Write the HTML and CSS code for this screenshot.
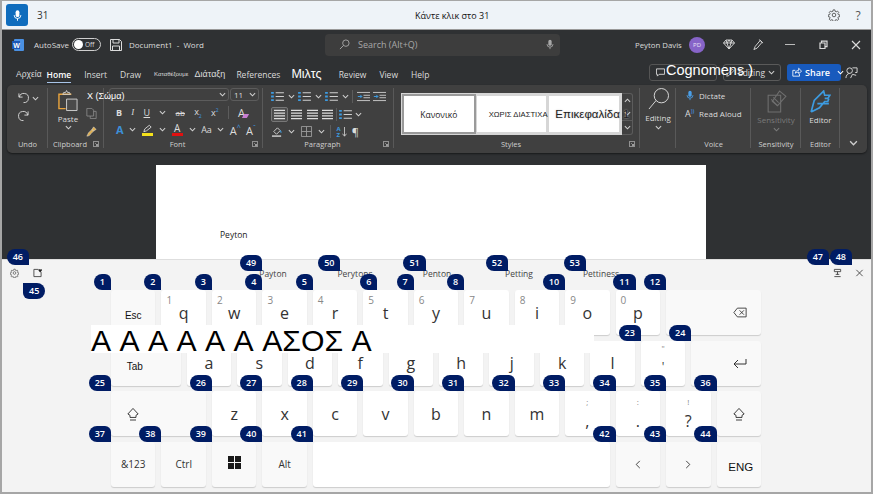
FILE: index.html
```html
<!DOCTYPE html>
<html lang="el">
<head>
    <meta charset="UTF-8">
    <meta name="viewport" content="width=device-width, initial-scale=1.0">
    <title>Voice Access - Word</title>
    <link rel="stylesheet" href="styles.css">
</head>
<body>
<svg class="defs" width="0" height="0">
    <symbol id="chev" viewBox="0 0 8 5"><path d="M1 1l3 3 3-3" fill="none" stroke="currentColor" stroke-width="1.2"/></symbol>
    <symbol id="gear" viewBox="0 0 16 16"><g fill="none" stroke="currentColor" stroke-width="1.1"><circle cx="8" cy="8" r="2.4"/><path d="M6.8 1.2h2.4l.4 2 1.3.6 1.8-1 1.6 1.7-1.1 1.7.6 1.3 2 .4v2.2l-2 .4-.6 1.3 1.1 1.7-1.6 1.7-1.8-1-1.3.6-.4 2H6.8l-.4-2-1.3-.6-1.8 1-1.6-1.7 1.1-1.7-.6-1.3-2-.4V7.900l2-.4.6-1.3L1.700 4.500l1.600-1.700 1.800 1 1.300-.6z"/></g></symbol>
    <symbol id="mic" viewBox="0 0 12 16"><rect x="3.5" y="1" width="5" height="9" rx="2.5" fill="currentColor"/><path d="M1.500 7.500a4.500 4.500 0 0 0 9 0M6 12v3" fill="none" stroke="currentColor" stroke-width="1.3"/></symbol>
    <symbol id="lines" viewBox="0 0 14 12"><path d="M1 1.500h12M1 4.500h12M1 7.500h12M1 10.500h12" stroke="currentColor" stroke-width="1.1"/></symbol>
    <symbol id="list" viewBox="0 0 14 12"><path d="M5 2h9M5 6h9M5 10h9" stroke="#d0d0d0" stroke-width="1.1"/><path d="M0 1h3v2H0zM0 5h3v2H0zM0 9h3v2H0z" fill="#3d9be0"/></symbol>
    <symbol id="indent" viewBox="0 0 16 12"><path d="M0 1h16M8 4.500h8M8 7.500h8M0 11h16" stroke="#d0d0d0" stroke-width="1.1"/><path d="M1 6h5M4 4l2 2-2 2" fill="none" stroke="#3d9be0" stroke-width="1.2"/></symbol>
    <symbol id="launcher" viewBox="0 0 8 8"><path d="M.5.500h7v7h-7z" fill="none" stroke="currentColor"/><path d="M3 3l3 3M6 4v2H4" fill="none" stroke="currentColor"/></symbol>
    <symbol id="shift" viewBox="0 0 14 16"><path d="M7 1.500L13 8l-2.500 1.500v2.500h-7V9.500L1 8z" fill="none" stroke="#333" stroke-width="1.1"/><path d="M3.500 15h7" stroke="#333" stroke-width="1.1"/></symbol>
</svg>

<div class="app">
    <header class="topbar">
        <div class="mic-button"><svg class="ico-mic" viewBox="0 0 12 16"><use href="#mic"/></svg></div>
        <span class="topbar-count">31</span>
        <span class="topbar-title">Κάντε κλικ στο 31</span>
        <svg class="topbar-gear"><use href="#gear"/></svg>
        <span class="topbar-help">?</span>
    </header>

    <section class="word">
        <div class="titlebar">
            <svg class="word-logo" viewBox="0 0 12 12"><rect x="2" width="10" height="12" rx="1" fill="#4a90e2"/><rect y="2" width="8" height="8" fill="#1c57b5"/><text x="1.200" y="8.500" class="word-logo-w">W</text></svg>
            <span class="autosave">AutoSave</span>
            <span class="toggle"><i class="toggle-knob"></i>Off</span>
            <svg class="save" viewBox="0 0 12 12"><path d="M.5.500h9l2 2v9H.5zM3 .500v3.500h6V.500M2.500 11.500V7h7v4.500" fill="none" stroke="currentColor"/></svg>
            <span class="doc-name">Document1 &nbsp;-&nbsp; Word</span>
            <div class="search">
                <svg class="search-ico" viewBox="0 0 12 12"><circle cx="7.500" cy="4.500" r="3.500" fill="none" stroke="currentColor"/><path d="M5 7l-4 4" stroke="currentColor"/></svg>
                <span>Search (Alt+Q)</span>
                <svg class="search-mic" viewBox="0 0 12 16"><use href="#mic"/></svg>
            </div>
            <span class="user">Peyton Davis</span>
            <span class="avatar">PD</span>
            <svg class="tb-ico diamond" viewBox="0 0 12 10"><path d="M3 .500h6l2.500 3L6 9.500.5 3.500zM.5 3.500h11M4 3.500L6 9.500l2-6M3 .500l1 3 2-3 2 3 1-3" fill="none" stroke="currentColor" stroke-width=".9"/></svg>
            <svg class="tb-ico pen" viewBox="0 0 12 12"><path d="M8.500 1.500l2 2L5 10l-3.500 1.500L3 8zM7 .500l4.500 4" fill="none" stroke="currentColor"/></svg>
            <span class="win-btn win-min"></span>
            <svg class="win-btn" viewBox="0 0 10 10"><path d="M2 3h5v5.500H2zM3.500 3V1.200H9v5.500H7" fill="none" stroke="currentColor" stroke-width="1.2"/></svg>
            <svg class="win-btn" viewBox="0 0 10 10"><path d="M1 1l8 8M9 1l-8 8" stroke="currentColor" stroke-width="1.1"/></svg>
        </div>

        <div class="tabs">
            <span class="tab tab-file">Αρχεία</span>
            <span class="tab tab-home">Home</span>
            <span class="tab">Insert</span>
            <span class="tab">Draw</span>
            <span class="tab tab-tiny">Καταθέξουμε</span>
            <span class="tab tab-layout">Διάταξη</span>
            <span class="tab">References</span>
            <span class="tab tab-mail">Μιλτς</span>
            <span class="tab">Review</span>
            <span class="tab">View</span>
            <span class="tab">Help</span>
            <div class="tab-actions">
                <span class="comments">
                    <svg class="comment-ico" viewBox="0 0 10 10"><path d="M.5 1h9v6H3.500L1.500 9V7h-1z" fill="none" stroke="currentColor"/></svg>
                    <span class="comments-over">Cognomens )</span>
                </span>
                <span class="editing-btn"><svg class="editing-pen" viewBox="0 0 12 12"><path d="M8.500 1.500l2 2L4 10l-3 1 1-3z" fill="none" stroke="currentColor"/></svg>Editing <svg class="chev"><use href="#chev"/></svg></span>
                <span class="share"><svg class="share-ico" viewBox="0 0 12 11"><path d="M4 3.500H1v7h8V8M4 7c0-2.500 2-3.500 4-3.500V1l3.500 3.500L8 7.500V5.500C6.500 5.500 5 6 4 7z" fill="none" stroke="currentColor"/></svg>Share<svg class="chev share-chev"><use href="#chev"/></svg></span>
                <svg class="people" viewBox="0 0 14 14"><circle cx="5" cy="5" r="3" fill="none" stroke="currentColor"/><path d="M1 13c0-3 2-5 4-5M8 2h5v5h-2M6 13l2-4 4 1" fill="none" stroke="currentColor"/></svg>
            </div>
        </div>

        <div class="ribbon">
            <div class="group group-undo">
                <div class="group-body undo-body">
                    <div class="undo-row">
                        <svg class="undo-ico" viewBox="0 0 12 12"><path d="M1 1v4h4M1.500 5A5 5 0 1 1 6 11" fill="none" stroke="currentColor"/></svg>
                        <svg class="chev"><use href="#chev"/></svg>
                    </div>
                    <div class="undo-row">
                        <svg class="undo-ico" viewBox="0 0 12 12"><path d="M11 1v4H7M10.500 5A5 5 0 1 0 6 11" fill="none" stroke="currentColor"/></svg>
                        <span class="chev"></span>
                    </div>
                </div>
                <div class="group-label">Undo</div>
            </div>

            <div class="group group-clipboard">
                <div class="group-body clip-body">
                    <div class="paste">
                        <svg class="paste-ico" viewBox="0 0 21 22"><path d="M14 4H1v15h7" fill="none" stroke="#e8a33d" stroke-width="1.5"/><path d="M5 4l1-2h2l1-2h0l1 2h2l1 2z" fill="none" stroke="#d0d0d0"/><path d="M9 9h11v12H9z" fill="#4a4a4a" stroke="#d0d0d0"/></svg>
                        <span>Paste</span>
                        <svg class="chev"><use href="#chev"/></svg>
                    </div>
                    <div class="clip-side">
                        <svg class="clip-copy" viewBox="0 0 12 13"><path d="M.5.500h6l2 2v7h-8zM8.500 4h3v8.500h-7V9.500" fill="none" stroke="#8a8a8a"/></svg>
                        <svg class="clip-brush" viewBox="0 0 13 13"><path d="M9 1l3 3-3 2-2-2zM7 4l2 2-3 3c-1 2-3 3-5 3 1-1 1-3 2-4z" fill="#e0b050" stroke="#d8d8d8" stroke-width=".6"/></svg>
                    </div>
                </div>
                <div class="group-label has-launcher">Clipboard<svg class="launcher"><use href="#launcher"/></svg></div>
            </div>

            <div class="group group-font">
                <div class="group-body font-body">
                    <div class="font-boxes">
                        <span class="font-box font-name"><svg class="chev"><use href="#chev"/></svg></span>
                        <span class="font-box font-size">11<svg class="chev"><use href="#chev"/></svg></span>
                    </div>
                    <div class="tool-row tool-row-short">
                        <b class="t-letter">B</b>
                        <i class="t-letter t-serif">I</i>
                        <span class="t-letter t-under">U</span>
                        <svg class="chev"><use href="#chev"/></svg>
                        <s class="t-small">ab</s>
                        <span class="t-letter">x<sub class="t-blue">2</sub></span>
                        <span class="t-letter">x<sup class="t-blue">2</sup></span>
                        <span class="t-sep"></span>
                        <span class="t-big">A<i class="t-pink"></i></span>
                    </div>
                    <div class="tool-row">
                        <span class="t-big t-effect">A</span>
                        <svg class="chev"><use href="#chev"/></svg>
                        <span class="t-color"><svg class="hl-ico" viewBox="0 0 12 9"><path d="M2 8l1-3 5-4 2 2-5 4z" fill="none" stroke="#d8d8d8"/></svg><i class="t-yellow"></i></span>
                        <svg class="chev"><use href="#chev"/></svg>
                        <span class="t-color"><span class="t-color-a">A</span><i class="t-red"></i></span>
                        <svg class="chev"><use href="#chev"/></svg>
                        <span class="t-letter t-aa">Aa</span>
                        <svg class="chev"><use href="#chev"/></svg>
                        <span class="t-big">A<sup class="t-caret">^</sup></span>
                        <span class="t-big">A<sup class="t-caret">ˇ</sup></span>
                    </div>
                </div>
                <div class="group-label has-launcher">Font<svg class="launcher"><use href="#launcher"/></svg></div>
            </div>

            <div class="group group-para">
                <div class="group-body para-body">
                    <div class="tool-row">
                        <svg class="p-ico"><use href="#list"/></svg><svg class="chev"><use href="#chev"/></svg>
                        <svg class="p-ico"><use href="#list"/></svg><svg class="chev"><use href="#chev"/></svg>
                        <svg class="p-ico"><use href="#list"/></svg><svg class="chev"><use href="#chev"/></svg>
                        <span class="t-sep"></span>
                        <svg class="p-ico"><use href="#indent"/></svg>
                        <svg class="p-ico"><use href="#indent"/></svg>
                    </div>
                    <div class="tool-row">
                        <span class="p-active"><svg class="p-ico"><use href="#lines"/></svg></span>
                        <svg class="p-ico"><use href="#lines"/></svg>
                        <svg class="p-ico"><use href="#lines"/></svg>
                        <svg class="p-ico"><use href="#lines"/></svg>
                        <span class="t-sep"></span>
                        <svg class="p-ico"><use href="#list"/></svg><svg class="chev"><use href="#chev"/></svg>
                        <span class="p-gap"></span>
                    </div>
                    <div class="tool-row">
                        <svg class="p-shade" viewBox="0 0 13 12"><path d="M3 6l4-4 3 3-4 4z" fill="none" stroke="#d8d8d8"/><path d="M10 4l2 3h-2z" fill="#3d9be0"/><path d="M1 11h10" stroke="#d8d8d8" stroke-width="1.5"/></svg><svg class="chev"><use href="#chev"/></svg>
                        <svg class="p-ico" viewBox="0 0 12 12"><path d="M.5.500h11v11H.5zM6 .500v11M.5 6h11" fill="none" stroke="#9a9a9a"/></svg><svg class="chev"><use href="#chev"/></svg>
                        <span class="t-sep"></span>
                        <span class="t-sort"><span class="t-sort-az"><b>A</b><b>Z</b></span><svg class="t-sort-arrow" viewBox="0 0 6 12"><path d="M3 0v11M.5 8L3 11l2.500-3" fill="none" stroke="#d0d0d0"/></svg></span>
                        <span class="t-pilcrow">¶</span>
                        <span class="p-gap"></span>
                    </div>
                </div>
                <div class="group-label has-launcher">Paragraph<svg class="launcher"><use href="#launcher"/></svg></div>
            </div>

            <div class="group group-styles">
                <div class="group-body styles-body">
                    <div class="gallery">
                        <span class="style-cell style-on"><span class="style-normal">Κανονικό</span></span>
                        <span class="style-cell"><span class="style-nospace">ΧΩΡΙΣ ΔΙΑΣΤΙΧΑ</span></span>
                        <span class="style-cell"><span class="style-head">Επικεφαλίδα 1</span></span>
                    </div>
                    <div class="scroller">
                        <span class="scroll-btn"><svg class="chev flip"><use href="#chev"/></svg></span>
                        <span class="scroll-btn"><svg class="chev"><use href="#chev"/></svg></span>
                        <span class="scroll-btn scroll-more"><svg class="chev"><use href="#chev"/></svg></span>
                    </div>
                </div>
                <div class="group-label has-launcher">Styles<svg class="launcher"><use href="#launcher"/></svg></div>
            </div>

            <div class="group group-editing">
                <svg class="big-ico" viewBox="0 0 22 24"><circle cx="14" cy="8" r="7.5" fill="none" stroke="currentColor"/><path d="M8.500 13L1 22" stroke="currentColor"/></svg>
                <span class="big-label">Editing</span>
                <svg class="chev"><use href="#chev"/></svg>
            </div>

            <div class="group group-voice">
                <div class="group-body voice-body">
                    <div class="voice-row"><svg class="voice-mic" viewBox="0 0 12 16"><use href="#mic"/></svg>Dictate</div>
                    <div class="voice-row"><span class="voice-a">A<i>))</i></span>Read Aloud</div>
                </div>
                <div class="group-label">Voice</div>
            </div>

            <div class="group group-sens">
                <div class="group-body big-body">
                    <svg class="big-ico sens-ico" viewBox="0 0 20 22"><path d="M2 5h12v16H2zM13 1l6 5-8 9-5-4z" fill="none" stroke="#6f6f6f"/><path d="M5 9l6 6M7 7l5 5" stroke="#6f6f6f"/></svg>
                    <span class="big-label big-dim">Sensitivity</span>
                    <svg class="chev big-dim"><use href="#chev"/></svg>
                </div>
                <div class="group-label">Sensitivity</div>
            </div>

            <div class="group group-editor">
                <div class="group-body big-body">
                    <svg class="big-ico" viewBox="0 0 20 22"><path d="M1 21L4 10 13 1l1 4h5l-2 3h-3M1 21l8-4 5-6h3l1-3M7 13h11" fill="none" stroke="#3d9be0" stroke-width="1.6"/></svg>
                    <span class="big-label">Editor</span>
                </div>
                <div class="group-label">Editor</div>
            </div>

            <div class="collapse"><svg class="chev collapse-chev"><use href="#chev"/></svg></div>
            <span class="font-over">Χ (Σώμα)</span>
        </div>

        <div class="doc">
            <div class="page"><span class="page-word">Peyton</span></div>
        </div>
    </section>

    <section class="keyboard">
        <div class="kb-head">
            <div class="kb-tools">
                <span class="kb-tool"><svg class="kb-gear"><use href="#gear"/></svg><span class="badge badge-46">46</span></span>
                <span class="kb-tool"><svg class="kb-clip" viewBox="0 0 10 10"><path d="M6 1H1v8h8V4" fill="none" stroke="#444"/><path d="M6 1.500c1-1 1.500-.5 2-.2.500-.3 1-.8 2 .2 0 1-1 2-2 3-1-1-2-2-2-3z" fill="#222"/></svg><span class="badge badge-45">45</span></span>
            </div>
            <div class="suggestions">
                <span class="sugg"><span class="sugg-text">Payton<span class="badge">49</span></span></span>
                <span class="sugg"><span class="sugg-text">Perytons<span class="badge">50</span></span></span>
                <span class="sugg"><span class="sugg-text">Penton<span class="badge">51</span></span></span>
                <span class="sugg"><span class="sugg-text">Petting<span class="badge">52</span></span></span>
                <span class="sugg"><span class="sugg-text">Pettiness<span class="badge">53</span></span></span>
            </div>
            <div class="kb-tools kb-tools-right">
                <span class="kb-tool"><svg class="kb-pin" viewBox="0 0 10 10"><path d="M1.500 1h7v2.500h-7zM5 3.500V7M1.500 9h7M3 6.500h4" fill="none" stroke="#444"/></svg><span class="badge badge-47">47</span></span>
                <span class="kb-tool"><svg class="kb-close" viewBox="0 0 10 10"><path d="M1.500 1.500l7 7M8.500 1.500l-7 7" stroke="#444"/></svg><span class="badge badge-47">48</span></span>
            </div>
        </div>

        <div class="keys">
            <!-- row 1 -->
            <div class="key fn s2 k-latin">Esc<span class="badge">1</span></div>
            <div class="key s2"><span class="hint">1</span>q<span class="badge">2</span></div>
            <div class="key s2"><span class="hint">2</span>w<span class="badge">3</span></div>
            <div class="key s2"><span class="hint">3</span>e<span class="badge">4</span></div>
            <div class="key s2"><span class="hint">4</span>r<span class="badge">5</span></div>
            <div class="key s2"><span class="hint">5</span>t<span class="badge badge-in14">6</span></div>
            <div class="key s2"><span class="hint">6</span>y<span class="badge">7</span></div>
            <div class="key s2"><span class="hint">7</span>u<span class="badge">8</span></div>
            <div class="key s2"><span class="hint">8</span>i</div>
            <div class="key s2"><span class="hint">9</span>o<span class="badge">10</span></div>
            <div class="key s2"><span class="hint">0</span>p<span class="badge badge-in20">11</span></div>
            <div class="key fn s4 k-right"><svg class="k-ico" viewBox="0 0 16 12"><path d="M5 1h10v10H5L1 6zM7.500 3.500l5 5M12.500 3.500l-5 5" fill="none" stroke="#333"/></svg><span class="badge">12</span></div>
            <!-- row 2 -->
            <div class="key fn s3 k-latin k-tab">Tab</div>
            <div class="key s2">a</div>
            <div class="key s2">s</div>
            <div class="key s2">d</div>
            <div class="key s2">f</div>
            <div class="key s2">g</div>
            <div class="key s2">h</div>
            <div class="key s2">j</div>
            <div class="key s2">k</div>
            <div class="key s2">l</div>
            <div class="key s2 k-quote"><span class="hint hint-mid">"</span>'<span class="badge">23</span></div>
            <div class="key fn s3 k-right"><svg class="k-ico" viewBox="0 0 14 11"><path d="M13 1v5H1M5 2L1 6l4 4" fill="none" stroke="#333"/></svg><span class="badge">24</span></div>
            <!-- row 3 -->
            <div class="key fn s4 k-left"><svg class="k-shift"><use href="#shift"/></svg><span class="badge">25</span></div>
            <div class="key s2">z<span class="badge">26</span></div>
            <div class="key s2">x<span class="badge">27</span></div>
            <div class="key s2">c<span class="badge">28</span></div>
            <div class="key s2">v<span class="badge">29</span></div>
            <div class="key s2">b<span class="badge">30</span></div>
            <div class="key s2">n<span class="badge">31</span></div>
            <div class="key s2">m<span class="badge">32</span></div>
            <div class="key s2 k-punct"><span class="hint hint-mid">;</span>,<span class="badge">33</span></div>
            <div class="key s2 k-punct"><span class="hint hint-mid">:</span>.<span class="badge">34</span></div>
            <div class="key s2 k-punct"><span class="hint hint-mid">!</span>?<span class="badge">35</span></div>
            <div class="key fn s2"><svg class="k-shift"><use href="#shift"/></svg><span class="badge">36</span></div>
            <!-- row 4 -->
            <div class="key fn s2 k-word">&amp;123<span class="badge">37</span></div>
            <div class="key fn s2 k-word">Ctrl<span class="badge">38</span></div>
            <div class="key fn s2"><span class="win-logo"><i></i><i></i><i></i><i></i></span><span class="badge">39</span></div>
            <div class="key fn s2 k-word">Alt<span class="badge">40</span></div>
            <div class="key s12"><span class="badge">41</span></div>
            <div class="key fn s2"><svg class="k-arrow" viewBox="0 0 6 10"><path d="M5 1L1 5l4 4" fill="none" stroke="#333"/></svg><span class="badge">42</span></div>
            <div class="key fn s2"><svg class="k-arrow" viewBox="0 0 6 10"><path d="M1 1l4 4-4 4" fill="none" stroke="#333"/></svg><span class="badge">43</span></div>
            <div class="key fn s2 k-latin k-eng">ENG<span class="badge">44</span></div>

            <div class="big-over">Α Α Α Α Α Α ΑΣΟΣ Α</div>
        </div>
    </section>
</div>
</body>
</html>
```

FILE: styles.css
```css
/* Global */
* {
    box-sizing: border-box;
}

body {
    margin: 0;
    background-color: #fff;
    font-family: "Open Sans", sans-serif;
    overflow: hidden;
}

.defs {
    display: block;
    height: 0;
}

svg {
    display: block;
    flex: none;
}

.app {
    width: 873px;
    height: 494px;
    display: flex;
    flex-direction: column;
    border: 2px solid #a6a6a6;
    border-top-width: 1px;
    background-color: #2f3133;
}

.chev {
    display: block;
    flex: none;
    width: 7px;
    height: 5px;
    color: #cfcfcf;
}

.flip {
    transform: rotate(180deg);
}

/* Top bar */
.topbar {
    height: 29px;
    flex: none;
    display: flex;
    align-items: center;
    padding: 0 7px 0 4px;
    background-color: #eef3f8;
    border-bottom: 1px solid #9a9a9a;
}

.mic-button {
    width: 22px;
    height: 22px;
    border-radius: 3px;
    background-color: #0f6cbd;
    display: flex;
    align-items: center;
    justify-content: center;
    color: #fff;
}

.ico-mic {
    width: 9px;
    height: 13px;
}

.topbar-count {
    margin-left: 9px;
    font-size: 10px;
    color: #333;
}

.topbar-title {
    flex: 1;
    text-align: center;
    font-size: 9px;
    color: #111;
    padding-left: 28px;
}

.topbar-gear {
    width: 12px;
    height: 12px;
    color: #444;
}

.topbar-help {
    width: 12px;
    margin-left: 12px;
    font-size: 12px;
    color: #555;
    text-align: center;
}

/* Word window */
.word {
    height: 229px;
    flex: none;
    display: flex;
    flex-direction: column;
    color: #dcdcdc;
}

.titlebar {
    height: 29px;
    flex: none;
    display: flex;
    align-items: center;
    font-size: 8px;
    padding-left: 10px;
}

.word-logo {
    width: 12px;
    height: 12px;
}

.word-logo-w {
    font: bold 7px "Liberation Sans", sans-serif;
    fill: #fff;
}

.autosave {
    margin-left: 10px;
    width: 38px;
}

.toggle {
    width: 29px;
    height: 13px;
    border: 1px solid #cfcfcf;
    border-radius: 7px;
    display: flex;
    align-items: center;
    padding-left: 1px;
    font-size: 6.5px;
    gap: 2px;
}

.toggle-knob {
    width: 9px;
    height: 9px;
    border-radius: 50%;
    background-color: #fff;
}

.save {
    width: 12px;
    height: 12px;
    margin-left: 9px;
}

.doc-name {
    margin-left: 7px;
    width: 196px;
    white-space: nowrap;
}

.search {
    width: 235px;
    height: 22px;
    border-radius: 4px;
    background-color: #3d3d3d;
    display: flex;
    align-items: center;
    padding: 0 6px 0 14px;
    color: #a8a8a8;
    gap: 8px;
    font-size: 9px;
}

.search span {
    flex: 1;
}

.search-ico {
    width: 11px;
    height: 11px;
}

.search-mic {
    width: 8px;
    height: 11px;
}

.user {
    margin-left: 75px;
    width: 54px;
    font-size: 7.8px;
    white-space: nowrap;
}

.avatar {
    width: 16px;
    height: 16px;
    border-radius: 50%;
    background-color: #8764c8;
    color: #e8e0f5;
    font-size: 6px;
    display: flex;
    align-items: center;
    justify-content: center;
}

.tb-ico {
    width: 12px;
    height: 11px;
}

.diamond {
    margin-left: 18px;
}

.pen {
    margin-left: 17px;
}

.win-btn {
    width: 10px;
    height: 10px;
    margin-left: 23px;
}

.win-min {
    height: 1px;
    background-color: #bbb;
    margin-left: 21px;
}

/* Tabs */
.tabs {
    height: 26px;
    flex: none;
    display: flex;
    align-items: center;
    gap: 13px;
    padding: 4px 13px 0 14px;
    font-size: 8.5px;
    white-space: nowrap;
}

.tab-file,
.tab-tiny,
.tab-layout,
.tab-mail {
    font-family: "Liberation Sans", sans-serif;
}

.tab-file {
    margin-right: -8px;
}

.tab-home {
    color: #fff;
    font-weight: 600;
    position: relative;
}

.tab-home::after {
    content: "";
    position: absolute;
    left: 0;
    right: 0;
    bottom: -3px;
    height: 1px;
    background-color: #a8c4e8;
}

.tab-tiny {
    font-size: 6px;
    margin-right: -7px;
}

.tab-layout {
    font-size: 9px;
    margin-right: -2px;
}

.tab-mail {
    font-size: 12.5px;
    color: #fff;
    margin: 0 4px 0 -2px;
}

.tab-actions {
    margin-left: auto;
    margin-top: -4px;
    display: flex;
    align-items: center;
    gap: 6px;
}

.comments {
    width: 68px;
    height: 17px;
    border: 1px solid #555;
    border-radius: 3px;
    display: flex;
    align-items: center;
    padding-left: 6px;
    position: relative;
}

.comment-ico {
    width: 9px;
    height: 9px;
}

.comments-over {
    position: absolute;
    left: 16px;
    top: -3px;
    font: 14.5px "Liberation Sans", sans-serif;
    color: #fff;
    z-index: 1;
}

.editing-btn {
    width: 58px;
    height: 17px;
    border: 1px solid #5a5a5a;
    border-radius: 3px;
    display: flex;
    align-items: center;
    justify-content: flex-end;
    gap: 3px;
    padding-right: 5px;
    font-size: 8.5px;
}

.editing-pen {
    width: 9px;
    height: 9px;
}

.share {
    width: 54px;
    height: 17px;
    border-radius: 3px;
    background-color: #185abd;
    color: #fff;
    display: flex;
    align-items: center;
    padding-left: 5px;
    gap: 3px;
    font-size: 9px;
    font-weight: 600;
}

.share-ico {
    width: 10px;
    height: 10px;
}

.share-chev {
    color: #fff;
    margin-left: 4px;
}

.people {
    width: 13px;
    height: 13px;
    margin-left: -2px;
}

/* Ribbon */
.ribbon {
    height: 68px;
    flex: none;
    margin: 0 4px 0 5px;
    display: flex;
    background-color: #404040;
    border-radius: 5px;
    position: relative;
    font-size: 8px;
    box-shadow: 0 1px 2px rgba(0, 0, 0, 0.5);
}

.group {
    display: flex;
    flex-direction: column;
    flex: none;
    padding-top: 3px;
    position: relative;
}

.group::after {
    content: "";
    position: absolute;
    right: 0;
    top: 3px;
    bottom: 5px;
    width: 1px;
    background-color: #595959;
}

.group-body {
    flex: 1;
    min-height: 0;
}

.group-label {
    height: 15px;
    flex: none;
    font-size: 7.5px;
    text-align: center;
    color: #cfcfcf;
    position: relative;
    line-height: 13px;
}

.has-launcher {
    padding-right: 12px;
}

.launcher {
    position: absolute;
    right: 5px;
    top: 3px;
    width: 6px;
    height: 6px;
    color: #bbb;
}

.group-undo {
    width: 41px;
}

.undo-body {
    display: flex;
    flex-direction: column;
    gap: 6px;
    padding: 4px 0 0 11px;
}

.undo-row {
    display: flex;
    align-items: center;
    gap: 3px;
}

.undo-ico {
    width: 11px;
    height: 12px;
}

.group-clipboard {
    width: 56px;
}

.clip-body {
    display: flex;
    padding-left: 2px;
}

.paste {
    width: 36px;
    display: flex;
    flex-direction: column;
    align-items: center;
    gap: 1px;
    padding-top: 2px;
    font-size: 8px;
}

.paste-ico {
    width: 20px;
    height: 22px;
}

.clip-side {
    display: flex;
    flex-direction: column;
    gap: 7px;
    padding-top: 20px;
}

.clip-copy,
.clip-brush {
    width: 11px;
    height: 11px;
}

.group-font {
    width: 159px;
}

.font-body {
    display: flex;
    flex-direction: column;
    padding: 0 4px 0 5px;
}

.font-boxes {
    display: flex;
    gap: 1px;
    height: 14px;
    margin-bottom: 3px;
}

.font-box {
    border: 1px solid #5c5c5c;
    border-radius: 3px;
    display: flex;
    align-items: center;
    justify-content: space-between;
    padding: 0 2px 0 3px;
    font-size: 8px;
}

.font-name {
    flex: 1;
    justify-content: flex-end;
}

.font-size {
    width: 29px;
}

.font-over {
    position: absolute;
    left: 80px;
    top: 6px;
    color: #fff;
    font: 9px "Liberation Sans", sans-serif;
}

.tool-row {
    height: 18px;
    display: flex;
    align-items: center;
    justify-content: space-between;
    padding: 0 3px 0 7px;
}

.tool-row-short {
    padding-right: 14px;
}

.t-letter {
    font-size: 9px;
    line-height: 1;
}

.t-serif {
    font-family: "Liberation Serif", serif;
}

.t-under {
    text-decoration: underline;
}

.t-small {
    font-size: 8px;
}

.t-blue {
    color: #3d9be0;
    font-size: 5px;
}

.t-sep {
    width: 1px;
    height: 13px;
    background-color: #5c5c5c;
}

.t-big {
    font-size: 11px;
    line-height: 1;
    position: relative;
}

.t-pink {
    position: absolute;
    right: -3px;
    bottom: 0;
    width: 5px;
    height: 4px;
    background-color: #c77dd0;
    transform: skewX(-30deg);
}

.t-effect {
    color: #3d8fd8;
    font-weight: 700;
}

.t-caret {
    color: #3d9be0;
    font-size: 7px;
}

.t-color {
    width: 12px;
    display: flex;
    flex-direction: column;
    align-items: center;
}

.t-color-a {
    font-size: 10px;
    line-height: 10px;
}

.hl-ico {
    width: 11px;
    height: 9px;
}

.t-yellow,
.t-red {
    width: 11px;
    height: 3px;
}

.t-yellow {
    background-color: #f5e11b;
}

.t-red {
    background-color: #e01010;
}

.group-para {
    width: 131px;
}

.para-body {
    padding: 0 2px;
}

.para-body .tool-row {
    height: 17.5px;
    padding: 0 6px;
}

.p-ico {
    width: 13px;
    height: 11px;
}

.p-active {
    border: 1px solid #777;
    border-radius: 2px;
    background-color: #4d4d4d;
    padding: 1px;
}

.p-shade {
    width: 12px;
    height: 11px;
}

.p-gap {
    width: 22px;
}

.t-sort {
    display: flex;
    align-items: center;
    gap: 1px;
}

.t-sort-az {
    display: flex;
    flex-direction: column;
    color: #3d9be0;
    font-size: 6px;
    line-height: 6px;
}

.t-sort-arrow {
    width: 5px;
    height: 12px;
}

.t-pilcrow {
    font-size: 11px;
    line-height: 1;
}

.group-styles {
    width: 246px;
}

.styles-body {
    display: flex;
    padding: 5px 0 0 7px;
}

.gallery {
    width: 221px;
    height: 42px;
    display: flex;
    gap: 3px;
    padding: 3px;
    background-color: #d6d6d6;
    color: #222;
}

.style-cell {
    flex: 1 1 0;
    min-width: 0;
    background-color: #fff;
    display: flex;
    align-items: center;
    white-space: nowrap;
}

.style-on {
    outline: 2px solid #9a9a9a;
}

.style-normal {
    font: 8.5px "Open Sans", sans-serif;
    margin: 0 auto;
}

.style-nospace {
    font: 7.7px "Liberation Sans", sans-serif;
    margin-left: 12px;
}

.style-head {
    font: 11.5px "Liberation Sans", sans-serif;
    margin-left: 6px;
    position: relative;
    z-index: 1;
    text-shadow: 0 0 2px #c8c8c8;
}

.scroller {
    width: 11px;
    height: 42px;
    display: flex;
    flex-direction: column;
    border: 1px solid #5c5c5c;
    border-left: none;
    border-radius: 0 3px 3px 0;
}

.scroll-btn {
    flex: 1;
    display: flex;
    align-items: center;
    justify-content: center;
}

.scroll-more {
    border-top: 1px solid #5c5c5c;
}

.group-editing {
    width: 36px;
    align-items: center;
    gap: 1px;
    padding: 3px 0 0;
    color: #dcdcdc;
}

.big-ico {
    width: 21px;
    height: 23px;
}

.big-label {
    font-size: 8px;
    line-height: 12px;
}

.big-body {
    display: flex;
    flex-direction: column;
    align-items: center;
    padding-top: 2px;
    gap: 1px;
}

.big-dim {
    color: #7a7a7a;
}

.group-voice {
    width: 75px;
}

.voice-body {
    padding: 1px 0 0 9px;
    display: flex;
    flex-direction: column;
    gap: 6px;
}

.voice-row {
    display: flex;
    align-items: center;
    height: 12px;
    white-space: nowrap;
    font-size: 8px;
}

.voice-mic {
    width: 8px;
    height: 11px;
    margin: 0 5px 0 1px;
    color: #4a9fe8;
}

.voice-a {
    width: 14px;
    font-size: 9px;
}

.voice-a i {
    color: #4a9fe8;
    font-size: 6px;
    font-style: normal;
    vertical-align: super;
}

.group-sens {
    width: 50px;
}

.group-editor {
    width: 39px;
}

.collapse {
    flex: 1;
    display: flex;
    justify-content: center;
    padding-top: 55px;
}

.collapse-chev {
    width: 9px;
    height: 6px;
}

/* Document */
.doc {
    flex: 1;
    min-height: 0;
    padding: 12px 0 0 154px;
}

.page {
    width: 550px;
    height: 100%;
    background-color: #fff;
    padding: 56px 0 0 64px;
}

.page-word {
    font-size: 8.5px;
    color: #222;
}

/* Keyboard */
.keyboard {
    flex: 1;
    min-height: 0;
    background-color: #f3f3f3;
    border-top: 1px solid #dedede;
    color: #333;
}

.kb-head {
    height: 30px;
    display: flex;
    justify-content: space-between;
    align-items: flex-start;
    padding: 8px 7px 0 8px;
}

.kb-tools {
    display: flex;
    gap: 14px;
    width: 40px;
}

.kb-tools-right {
    justify-content: flex-end;
    gap: 13px;
}

.kb-tool {
    position: relative;
    display: block;
}

.kb-gear,
.kb-clip,
.kb-pin,
.kb-close {
    width: 9px;
    height: 10px;
    color: #444;
}

.suggestions {
    width: 410px;
    display: grid;
    grid-template-columns: repeat(5, 1fr);
    font-size: 8.5px;
    color: #444;
    line-height: 12px;
}

.sugg {
    text-align: center;
    white-space: nowrap;
}

.sugg-text {
    position: relative;
    display: inline-block;
}

/* number tags, they hang off the top left corner of whatever they point at */
.badge {
    position: absolute;
    right: 100%;
    bottom: 100%;
    height: 16px;
    padding: 0 6px;
    background-color: #001c64;
    color: #fff;
    font: 600 9px/16px "Open Sans", sans-serif;
    text-align: center;
    border-radius: 8px 6px 0 8px;
    z-index: 2;
}

.sugg-text .badge {
    right: calc(100% - 3px);
    bottom: calc(100% - 3px);
}

.badge-46 {
    right: -10px;
    bottom: calc(100% + 3px);
}

.badge-45 {
    right: auto;
    bottom: auto;
    left: -10px;
    top: calc(100% + 5px);
    border-radius: 0 8px 8px 6px;
}

.badge-47 {
    right: calc(100% + 4px);
    bottom: calc(100% + 3px);
}

.kb-tool:last-child .badge-47 {
    right: calc(100% + 3px);
}

.keys {
    position: relative;
    width: 650px;
    margin-left: 109px;
    display: grid;
    grid-template-columns: repeat(26, 1fr);
    grid-auto-rows: 45px;
    column-gap: 6px;
    row-gap: 5.6px;
}

.key {
    position: relative;
    display: flex;
    align-items: center;
    justify-content: center;
    background-color: #fff;
    border-radius: 3px;
    box-shadow: 0 1px 1px rgba(0, 0, 0, 0.16);
    font-size: 16px;
    color: #333;
}

.fn {
    background-color: #f9f9f9;
}

.s2 {
    grid-column: span 2;
}

.s3 {
    grid-column: span 3;
}

.s4 {
    grid-column: span 4;
}

.s12 {
    grid-column: span 12;
}

.hint {
    position: absolute;
    left: 5px;
    top: 3px;
    font-size: 10px;
    line-height: 14px;
    color: #888;
}

.hint-mid {
    left: 0;
    right: 0;
    top: 4px;
    text-align: center;
    font-size: 8px;
}

.k-latin {
    font: 10px "Liberation Sans", sans-serif;
    color: #111;
    padding-top: 6px;
}

.k-tab {
    padding-right: 22px;
}

.k-eng {
    font-size: 11.5px;
    padding: 5px 0 0 4px;
}

.k-word {
    font-size: 10px;
}

.k-ico {
    width: 14px;
    height: 11px;
}

.k-right {
    justify-content: flex-end;
    padding-right: 14px;
}

.k-left {
    justify-content: flex-start;
    padding-left: 16px;
}

.k-shift {
    width: 12px;
    height: 14px;
}

.k-arrow {
    width: 6px;
    height: 9px;
}

.k-punct {
    padding-top: 14px;
}

.k-quote {
    font-size: 12px;
    padding-top: 6px;
}

.k-quote .hint-mid {
    top: 0;
}

.badge-in14 {
    right: calc(100% - 14px);
}

.badge-in20 {
    right: calc(100% - 20px);
}

.win-logo {
    width: 13px;
    height: 13px;
    display: grid;
    grid-template-columns: 1fr 1fr;
    gap: 1px;
    margin-top: -3px;
}

.win-logo i {
    background-color: #1a1a1a;
}

.big-over {
    position: absolute;
    left: -20px;
    top: 35px;
    width: 503px;
    height: 28px;
    padding-top: 2px;
    background-color: #fff;
    font: 30.2px/28px "Liberation Sans", sans-serif;
    font-kerning: none;
    color: #000;
    white-space: pre;
    z-index: 1;
}
```
